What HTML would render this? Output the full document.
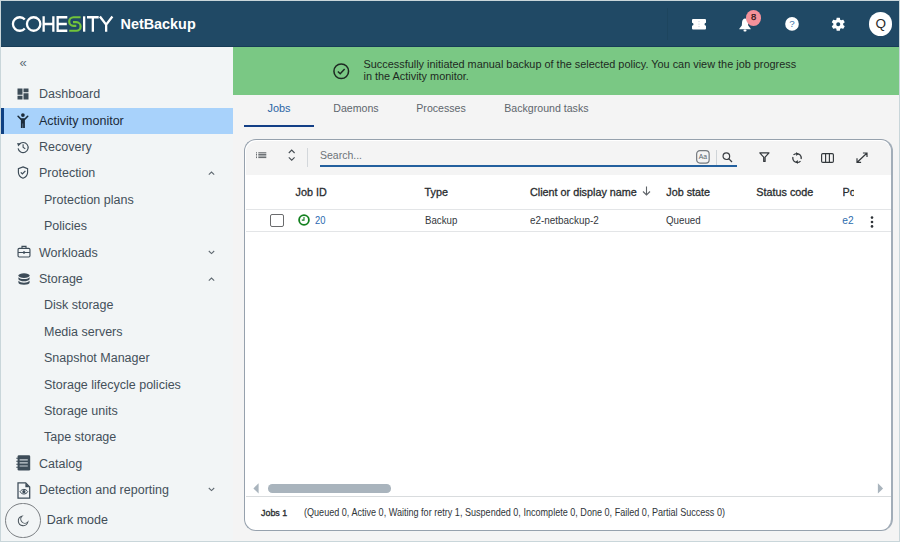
<!DOCTYPE html>
<html><head><meta charset="utf-8"><style>
html,body{margin:0;padding:0;width:900px;height:542px;overflow:hidden;background:#f3f4f5}
body{position:relative;font-family:'Liberation Sans', sans-serif}
.t{position:absolute;white-space:nowrap}
svg{overflow:visible}
</style></head><body>
<div style="position:absolute;left:0px;top:0px;width:900px;height:542px;background:#c9d6da"></div>
<div style="position:absolute;left:1px;top:1px;width:898px;height:540px;background:#f4f4f4"></div>
<div style="position:absolute;left:1px;top:47px;width:232px;height:494px;background:#f2f5f6"></div>
<div style="position:absolute;left:1px;top:1px;width:898px;height:46px;background:#204965"></div>
<div style="position:absolute;left:1px;top:46px;width:898px;height:1px;background:#173c57"></div>
<div style="position:absolute;left:666.5px;top:8px;width:1px;height:32px;background:#1d455e"></div>
<svg style="position:absolute;left:0px;top:0px;" width="130" height="47" viewBox="0 0 130 47"><g fill="none" stroke="#fff" stroke-width="2.3">
<path d="M24.8 19.6A6.75 6.75 0 1 0 24.8 28.4"/>
<ellipse cx="33.65" cy="24" rx="6.7" ry="6.75"/>
<path d="M43.65 16.3V31.7M53.35 16.3V31.7M43.65 24H53.35"/>
<path d="M67.3 17.25H57.65V30.75H67.3M57.65 24H66.8"/>
<path d="M84.15 16.3V31.7"/>
<path d="M87 17.25H98.7M92.85 17.25V31.7"/>
<path d="M99.9 16.5 106.15 24.6 112.4 16.5M106.15 24.6V31.7"/>
</g>
<g fill="none" stroke="#72c43a" stroke-width="2.2">
<path d="M80.6 17.25H73.5A4.3 4.3 0 0 0 73.5 25.85H76.3"/>
<path d="M73 22.15H76.3A4.3 4.3 0 0 1 76.3 30.75H69.2"/>
</g></svg>
<div class="t" style="left:120.50px;top:16.81px;font-size:14.4px;line-height:14.4px;font-weight:700;color:#fff;">NetBackup</div>
<svg style="position:absolute;left:691.5px;top:18.8px;" width="14" height="10.4" viewBox="0 0 14 10.4"><path d="M1 0h12a1 1 0 0 1 1 1v2.7a1.5 1.5 0 0 0 0 3V9.4a1 1 0 0 1-1 1H1a1 1 0 0 1-1-1V6.7a1.5 1.5 0 0 0 0-3V1a1 1 0 0 1 1-1z" fill="#fff"/><path d="M7 2.2v0.9M7 4.7v0.9M7 7.2v0.9" stroke="#a8bccb" stroke-width="0.9"/></svg>
<svg style="position:absolute;left:739px;top:17.6px;" width="12" height="14" viewBox="0 0 12 14"><path d="M6 0.5C4.6 0.5 3.3 1.8 3.1 3.8L2.8 7.6 0.3 10.7V11.3H11.7V10.7L9.2 7.6 8.9 3.8C8.7 1.8 7.4 0.5 6 0.5z" fill="#fff"/><rect x="4.5" y="11.6" width="3" height="1.8" rx="0.9" fill="#fff"/></svg>
<div style="position:absolute;left:745.8px;top:10px;width:15.5px;height:15.5px;background:#f4919a;border-radius:50%"></div>
<div class="t" style="left:750.90px;top:11.84px;font-size:9.4px;line-height:9.4px;font-weight:400;color:#2a1414;-webkit-text-stroke:0.25px #2a1414">8</div>
<svg style="position:absolute;left:784.5px;top:17px;" width="14" height="14" viewBox="0 0 14 14"><circle cx="7" cy="6.9" r="6.8" fill="#fff"/><text x="7" y="10.4" text-anchor="middle" font-family="Liberation Sans" font-size="9.8" fill="#3f74a8">?</text></svg>
<svg style="position:absolute;left:829.85px;top:15.75px;" width="16.5" height="16.5" viewBox="0 0 24 24"><path fill="#fff" d="M19.14 12.94c.04-.3.06-.61.06-.94 0-.32-.02-.64-.07-.94l2.03-1.58a.49.49 0 0 0 .12-.61l-1.92-3.32a.488.488 0 0 0-.59-.22l-2.39.96c-.5-.38-1.03-.7-1.62-.94l-.36-2.54a.484.484 0 0 0-.48-.41h-3.84c-.24 0-.43.17-.47.41l-.36 2.54c-.59.24-1.13.57-1.62.94l-2.39-.96c-.22-.08-.47 0-.59.22L2.74 8.87c-.12.21-.08.47.12.61l2.03 1.58c-.05.3-.09.63-.09.94s.02.64.07.94l-2.03 1.58a.49.49 0 0 0-.12.61l1.92 3.32c.12.22.37.29.59.22l2.39-.96c.5.38 1.03.7 1.62.94l.36 2.54c.05.24.24.41.48.41h3.84c.24 0 .44-.17.47-.41l.36-2.54c.59-.24 1.13-.56 1.62-.94l2.39.96c.22.08.47 0 .59-.22l1.92-3.32c.12-.22.07-.47-.12-.61l-2.01-1.58zM12 14.9c-1.6 0-2.9-1.3-2.9-2.9s1.3-2.9 2.9-2.9 2.9 1.3 2.9 2.9-1.3 2.9-2.9 2.9z"/></svg>
<div style="position:absolute;left:868.7px;top:11.9px;width:23.7px;height:23.7px;background:#fff;border-radius:50%"></div>
<div class="t" style="left:875.50px;top:17.37px;font-size:13.5px;line-height:13.5px;font-weight:400;color:#2a2a2a;">Q</div>
<div class="t" style="left:19.50px;top:56.00px;font-size:13px;line-height:13px;font-weight:400;color:#5b6b78;">&laquo;</div>
<div style="position:absolute;left:1px;top:108px;width:232px;height:26px;background:#a8d2fb"></div>
<div style="position:absolute;left:1px;top:108px;width:3px;height:26px;background:#0f4082"></div>
<div class="t" style="left:39.00px;top:88.12px;font-size:12.5px;line-height:12.5px;font-weight:400;color:#44505a;">Dashboard</div>
<div class="t" style="left:39.00px;top:114.52px;font-size:12.5px;line-height:12.5px;font-weight:400;color:#1b2b3a;">Activity monitor</div>
<div class="t" style="left:39.00px;top:140.92px;font-size:12.5px;line-height:12.5px;font-weight:400;color:#44505a;">Recovery</div>
<div class="t" style="left:39.00px;top:167.32px;font-size:12.5px;line-height:12.5px;font-weight:400;color:#44505a;">Protection</div>
<div class="t" style="left:44.00px;top:193.72px;font-size:12.5px;line-height:12.5px;font-weight:400;color:#44505a;">Protection plans</div>
<div class="t" style="left:44.00px;top:220.12px;font-size:12.5px;line-height:12.5px;font-weight:400;color:#44505a;">Policies</div>
<div class="t" style="left:39.00px;top:246.52px;font-size:12.5px;line-height:12.5px;font-weight:400;color:#44505a;">Workloads</div>
<div class="t" style="left:39.00px;top:272.92px;font-size:12.5px;line-height:12.5px;font-weight:400;color:#44505a;">Storage</div>
<div class="t" style="left:44.00px;top:299.32px;font-size:12.5px;line-height:12.5px;font-weight:400;color:#44505a;">Disk storage</div>
<div class="t" style="left:44.00px;top:325.72px;font-size:12.5px;line-height:12.5px;font-weight:400;color:#44505a;">Media servers</div>
<div class="t" style="left:44.00px;top:352.12px;font-size:12.5px;line-height:12.5px;font-weight:400;color:#44505a;">Snapshot Manager</div>
<div class="t" style="left:44.00px;top:378.52px;font-size:12.5px;line-height:12.5px;font-weight:400;color:#44505a;">Storage lifecycle policies</div>
<div class="t" style="left:44.00px;top:404.92px;font-size:12.5px;line-height:12.5px;font-weight:400;color:#44505a;">Storage units</div>
<div class="t" style="left:44.00px;top:431.32px;font-size:12.5px;line-height:12.5px;font-weight:400;color:#44505a;">Tape storage</div>
<div class="t" style="left:39.00px;top:457.72px;font-size:12.5px;line-height:12.5px;font-weight:400;color:#44505a;">Catalog</div>
<div class="t" style="left:39.00px;top:484.12px;font-size:12.5px;line-height:12.5px;font-weight:400;color:#44505a;">Detection and reporting</div>
<svg style="position:absolute;left:17.3px;top:88.3px;" width="12" height="12" viewBox="0 0 12 12"><path fill="#3d4c58" d="M0.5 0.5h5v6.3h-5zM6.5 0.5h5v3.8h-5zM0.5 7.8h5v3.7h-5zM6.5 5.3h5v6.2h-5z"/></svg>
<svg style="position:absolute;left:17px;top:112.6px;" width="12" height="15" viewBox="0 0 12 15"><circle cx="5.9" cy="2.1" r="1.85" fill="#1b2b3a"/><path d="M1.1 3.3 4 6.2H7.8L10.7 3.3" stroke="#1b2b3a" stroke-width="1.6" fill="none" stroke-linecap="round" stroke-linejoin="round"/><path fill="#1b2b3a" d="M3.9 5.6h4v4.8h-4zM3.9 10h1.8v4.9H3.9zM6.1 10h1.8v4.9H6.1z"/></svg>
<svg style="position:absolute;left:17.2px;top:140.8px;" width="12" height="12" viewBox="0 0 12 12"><path fill="none" stroke="#3d4c58" stroke-width="1.15" d="M2.2 3.3A5.05 5.05 0 1 1 1.1 7.4"/><path fill="#3d4c58" d="M0.1 1.9 3.9 2.6 1.2 5.5z"/><path fill="none" stroke="#3d4c58" stroke-width="1.1" d="M6.1 3.2V6.3L8.3 7.9"/></svg>
<svg style="position:absolute;left:16.9px;top:166.0px;" width="12" height="13" viewBox="0 0 12 13"><path fill="none" stroke="#3d4c58" stroke-width="1.15" d="M6 0.9 10.6 2.7v3.6c0 2.9-2 5-4.6 5.9C3.4 11.3 1.4 9.2 1.4 6.3V2.7z"/><path fill="none" stroke="#3d4c58" stroke-width="1.3" d="M3.8 6.4 5.4 7.9 8.4 4.9"/></svg>
<svg style="position:absolute;left:16.5px;top:244.8px;" width="14" height="13" viewBox="0 0 14 13"><rect x="1.05" y="3.4" width="11.9" height="8.6" rx="1.2" fill="none" stroke="#3d4c58" stroke-width="1.15"/><path d="M5 3.4V1.4h4v2M1.05 7.5h11.9" fill="none" stroke="#3d4c58" stroke-width="1.15"/><circle cx="7" cy="7.5" r="1.25" fill="#3d4c58"/></svg>
<svg style="position:absolute;left:17.6px;top:273.0px;" width="12" height="12" viewBox="0 0 12 12"><ellipse cx="6" cy="2.6" rx="5.6" ry="2.3" fill="#3d4c58"/><path fill="#3d4c58" d="M0.4 4.2C1.4 5.5 3.6 6.1 6 6.1s4.6-.6 5.6-1.9v2C10.6 7.6 8.4 8.2 6 8.2S1.4 7.6.4 6.2zM0.4 7.8C1.4 9.1 3.6 9.7 6 9.7s4.6-.6 5.6-1.9v1.6c0 1.3-2.5 2.3-5.6 2.3S.4 10.7.4 9.4z"/></svg>
<svg style="position:absolute;left:15.8px;top:455.2px;" width="15" height="16" viewBox="0 0 15 16"><rect x="1.6" y="0.3" width="12.6" height="15.2" rx="1.3" fill="#3d4c58"/><path d="M3.6 4.9h8.2M3.6 7.8h8.2M3.6 11h8.2" stroke="#c9d0d5" stroke-width="1.15"/><path d="M0.3 3.2h1.8M0.3 6.2h1.8M0.3 9.2h1.8M0.3 12.2h1.8" stroke="#3d4c58" stroke-width="1.1"/></svg>
<svg style="position:absolute;left:16.6px;top:481.6px;" width="14" height="17" viewBox="0 0 14 17"><path fill="none" stroke="#3d4c58" stroke-width="1.25" d="M1 0.9h7.7l4 4v11.2H1z"/><path fill="#3d4c58" d="M8.4 0.9v4.3h4.3z"/><path fill="none" stroke="#3d4c58" stroke-width="1" d="M3 9.7c1-1.5 2.3-2.3 3.9-2.3s2.9.8 3.9 2.3c-1 1.5-2.3 2.3-3.9 2.3S4 11.2 3 9.7z"/><circle cx="6.9" cy="9.7" r="1.6" fill="#3d4c58"/></svg>
<svg style="position:absolute;left:207.5px;top:171.4px;" width="7" height="5" viewBox="0 0 7 5"><path d="M0.8 3.6 3.5 1 6.2 3.6" fill="none" stroke="#5f6870" stroke-width="1.05"/></svg>
<svg style="position:absolute;left:207.5px;top:249.7px;" width="7" height="5" viewBox="0 0 7 5"><path d="M0.8 1 3.5 3.6 6.2 1" fill="none" stroke="#5f6870" stroke-width="1.05"/></svg>
<svg style="position:absolute;left:207.5px;top:276.99999999999994px;" width="7" height="5" viewBox="0 0 7 5"><path d="M0.8 3.6 3.5 1 6.2 3.6" fill="none" stroke="#5f6870" stroke-width="1.05"/></svg>
<svg style="position:absolute;left:207.5px;top:487.3px;" width="7" height="5" viewBox="0 0 7 5"><path d="M0.8 1 3.5 3.6 6.2 1" fill="none" stroke="#5f6870" stroke-width="1.05"/></svg>
<div style="position:absolute;left:5px;top:502.6px;width:35.8px;height:35.8px;border:1.1px solid #7b7f83;border-radius:50%;box-sizing:border-box"></div>
<svg style="position:absolute;left:17px;top:515.3px;" width="12" height="12" viewBox="0 0 12 12"><path fill="none" stroke="#4b565e" stroke-width="1.05" d="M5 1.2A4.8 4.8 0 1 0 10.8 7 3.9 3.9 0 0 1 5 1.2z"/></svg>
<div class="t" style="left:46.80px;top:514.12px;font-size:12.5px;line-height:12.5px;font-weight:400;color:#3f4c56;">Dark mode</div>
<div style="position:absolute;left:233px;top:47px;width:666px;height:48px;background:#7ac884"></div>
<svg style="position:absolute;left:333px;top:63px;" width="16.5" height="16.5" viewBox="0 0 16 16"><circle cx="8" cy="8" r="7.1" fill="none" stroke="#1e2a22" stroke-width="1.5"/><path d="M4.7 8.2 7 10.4 11.3 5.9" fill="none" stroke="#1e2a22" stroke-width="1.5"/></svg>
<div class="t" style="left:363.50px;top:59.07px;font-size:10.9px;line-height:10.9px;font-weight:400;color:#1e2a22;">Successfully initiated manual backup of the selected policy. You can view the job progress</div>
<div class="t" style="left:363.50px;top:71.07px;font-size:10.9px;line-height:10.9px;font-weight:400;color:#1e2a22;">in the Activity monitor.</div>
<div class="t" style="left:267.50px;top:103.17px;font-size:10.9px;line-height:10.9px;font-weight:400;color:#2b64a4;">Jobs</div>
<div class="t" style="left:333.30px;top:102.53px;font-size:10.6px;line-height:10.6px;font-weight:400;color:#5e666d;">Daemons</div>
<div class="t" style="left:416.30px;top:102.53px;font-size:10.6px;line-height:10.6px;font-weight:400;color:#5e666d;">Processes</div>
<div class="t" style="left:504.30px;top:102.53px;font-size:10.6px;line-height:10.6px;font-weight:400;color:#5e666d;">Background tasks</div>
<div style="position:absolute;left:244px;top:125px;width:70px;height:2px;background:#133f86"></div>
<div style="position:absolute;left:243.9px;top:139.2px;width:649px;height:391.8px;background:#fff;border:1.5px solid #96a1ad;border-right:2px solid #a2adb8;border-radius:12px;box-sizing:border-box;overflow:hidden"></div>
<div style="position:absolute;left:245.5px;top:140.5px;width:645px;height:34px;background:#f4f4f4;border-radius:11px 11px 0 0"></div>
<svg style="position:absolute;left:255.5px;top:152px;" width="11" height="6.5" viewBox="0 0 11 6.5"><path d="M0 0.8h1M0 2.4h1M0 4h1M0 5.6h1M2.3 0.8h8M2.3 2.4h8M2.3 4h8M2.3 5.6h8" stroke="#5d6266" stroke-width="1"/></svg>
<svg style="position:absolute;left:288px;top:149px;" width="8" height="12" viewBox="0 0 8 12"><path d="M0.8 4 3.7 1.1 6.6 4M0.8 8.3 3.7 11.2 6.6 8.3" fill="none" stroke="#454c52" stroke-width="1.1"/></svg>
<div style="position:absolute;left:307px;top:147.5px;width:1px;height:19px;background:#d3d7db"></div>
<div class="t" style="left:320.00px;top:150.41px;font-size:10.5px;line-height:10.5px;font-weight:400;color:#6c7378;">Search...</div>
<div style="position:absolute;left:320px;top:165px;width:417px;height:2px;background:#23609e"></div>
<svg style="position:absolute;left:696px;top:150.2px;" width="14" height="14" viewBox="0 0 14 14"><rect x="0.65" y="0.65" width="12.5" height="12.5" rx="3.3" fill="none" stroke="#74797e" stroke-width="1.2"/><text x="6.9" y="9.3" text-anchor="middle" font-family="Liberation Sans" font-size="6.8" fill="#59636b">Aa</text></svg>
<div style="position:absolute;left:716px;top:150px;width:1px;height:15px;background:#cfd4d8"></div>
<svg style="position:absolute;left:721.5px;top:151.8px;" width="12" height="11" viewBox="0 0 12 11"><circle cx="4.35" cy="4.2" r="3.3" fill="none" stroke="#3b3f44" stroke-width="1.2"/><path d="M6.7 6.6 10 10" stroke="#3b3f44" stroke-width="1.3"/></svg>
<svg style="position:absolute;left:759px;top:152px;" width="11" height="10" viewBox="0 0 11 10"><path d="M0.8 0.9h9.2L6.1 5.2v4.2H4.7V5.2z" fill="none" stroke="#33383c" stroke-width="1.2" stroke-linejoin="round"/></svg>
<svg style="position:absolute;left:790.5px;top:150.5px;" width="12" height="14" viewBox="0 0 12 14"><path d="M9.3 4.2A4.6 4.6 0 0 0 2.5 3.9M1.9 6A4.6 4.6 0 0 0 2.7 9.8" fill="none" stroke="#33383c" stroke-width="1.3"/><path d="M2.7 9.8A4.6 4.6 0 0 0 9.5 10.1M10.1 8A4.6 4.6 0 0 0 9.3 4.2" fill="none" stroke="#33383c" stroke-width="1.3"/><path d="M5.2 1.1 7.6 3.1 5.2 5.1z M6.8 8.9 4.4 10.9 6.8 12.9z" fill="#33383c"/></svg>
<svg style="position:absolute;left:820.5px;top:152.5px;" width="13" height="10" viewBox="0 0 13 10"><rect x="0.6" y="0.6" width="11.8" height="8.8" rx="1.2" fill="none" stroke="#33383c" stroke-width="1.15"/><path d="M4.6 0.6v8.8M8.4 0.6v8.8" stroke="#33383c" stroke-width="1.15"/></svg>
<svg style="position:absolute;left:855.5px;top:151.5px;" width="12" height="11.5" viewBox="0 0 12 11.5"><path d="M1.2 10.3 10.8 1.2M6.9 1h4.1v4.1M1 6.2v4.1h4.1" fill="none" stroke="#33383c" stroke-width="1.2"/></svg>
<div class="t" style="left:295.50px;top:186.66px;font-size:10.8px;line-height:10.8px;font-weight:400;color:#2a2d30;-webkit-text-stroke:0.3px #2a2d30">Job ID</div>
<div class="t" style="left:424.50px;top:186.66px;font-size:10.8px;line-height:10.8px;font-weight:400;color:#2a2d30;-webkit-text-stroke:0.3px #2a2d30">Type</div>
<div class="t" style="left:530.00px;top:186.66px;font-size:10.8px;line-height:10.8px;font-weight:400;color:#2a2d30;-webkit-text-stroke:0.3px #2a2d30">Client or display name</div>
<svg style="position:absolute;left:641.5px;top:186px;" width="9" height="10" viewBox="0 0 9 10"><path d="M4.5 0.5v8.5M1 5.5l3.5 3.5L8 5.5" fill="none" stroke="#5f6469" stroke-width="1.1"/></svg>
<div class="t" style="left:666.30px;top:186.66px;font-size:10.8px;line-height:10.8px;font-weight:400;color:#2a2d30;-webkit-text-stroke:0.3px #2a2d30">Job state</div>
<div class="t" style="left:756.30px;top:186.66px;font-size:10.8px;line-height:10.8px;font-weight:400;color:#2a2d30;-webkit-text-stroke:0.3px #2a2d30">Status code</div>
<div style="position:absolute;left:842.5px;top:186px;width:11px;height:14px;overflow:hidden"><div class="t" style="left:0;top:0.8px;font-size:10.8px;line-height:10.8px;font-weight:400;color:#2a2d30;-webkit-text-stroke:0.3px #2a2d30">Po</div></div>
<div style="position:absolute;left:245.5px;top:209.2px;width:645px;height:1px;background:#e3e5e7"></div>
<div style="position:absolute;left:245.5px;top:231px;width:645px;height:1px;background:#e3e5e7"></div>
<div style="position:absolute;left:270.2px;top:213.6px;width:13.6px;height:13.3px;border:1.8px solid #6a6b6d;border-radius:2px;box-sizing:border-box"></div>
<svg style="position:absolute;left:298px;top:213.8px;" width="12" height="12" viewBox="0 0 12 12"><circle cx="6" cy="6" r="4.9" fill="none" stroke="#13801f" stroke-width="1.8"/><path d="M6 2.9V6.1H3.8" fill="none" stroke="#13801f" stroke-width="1.1"/></svg>
<div class="t" style="left:314.60px;top:215.60px;font-size:10.4px;line-height:10.4px;font-weight:400;color:#2a69b0;transform:scaleX(0.9);transform-origin:0 0;">20</div>
<div class="t" style="left:424.50px;top:215.87px;font-size:10.2px;line-height:10.2px;font-weight:400;color:#33383c;transform:scaleX(0.95);transform-origin:0 0;">Backup</div>
<div class="t" style="left:530.00px;top:215.87px;font-size:10.2px;line-height:10.2px;font-weight:400;color:#33383c;transform:scaleX(0.97);transform-origin:0 0;">e2-netbackup-2</div>
<div class="t" style="left:666.30px;top:215.87px;font-size:10.2px;line-height:10.2px;font-weight:400;color:#33383c;transform:scaleX(0.955);transform-origin:0 0;">Queued</div>
<div class="t" style="left:842.30px;top:215.87px;font-size:10.2px;line-height:10.2px;font-weight:400;color:#2d6cae;">e2</div>
<svg style="position:absolute;left:870px;top:215.5px;" width="4" height="12" viewBox="0 0 4 12"><circle cx="2" cy="1.6" r="1.3" fill="#2f3438"/><circle cx="2" cy="6" r="1.3" fill="#2f3438"/><circle cx="2" cy="10.4" r="1.3" fill="#2f3438"/></svg>
<svg style="position:absolute;left:253.3px;top:483px;" width="6.5" height="11" viewBox="0 0 6.5 11"><path d="M5.6 0.3v10.2L0.4 5.4z" fill="#a9b4bd"/></svg>
<div style="position:absolute;left:267.5px;top:484px;width:123.5px;height:8.6px;background:#a9b4bd;border-radius:4.3px"></div>
<svg style="position:absolute;left:877.3px;top:483px;" width="6.5" height="11" viewBox="0 0 6.5 11"><path d="M0.9 0.3v10.2L6.1 5.4z" fill="#a9b4bd"/></svg>
<div style="position:absolute;left:245.5px;top:495.5px;width:645px;height:1.3px;background:#d9dcde"></div>
<div class="t" style="left:261.00px;top:508.19px;font-size:9.7px;line-height:9.7px;font-weight:400;color:#2a2d30;transform:scaleX(0.92);transform-origin:0 0;-webkit-text-stroke:0.35px #2a2d30">Jobs 1</div>
<div class="t" style="left:304.40px;top:508.07px;font-size:10.2px;line-height:10.2px;font-weight:400;color:#2f3438;transform:scaleX(0.89);transform-origin:0 0;">(Queued 0, Active 0, Waiting for retry 1, Suspended 0, Incomplete 0, Done 0, Failed 0, Partial Success 0)</div>
</body></html>
